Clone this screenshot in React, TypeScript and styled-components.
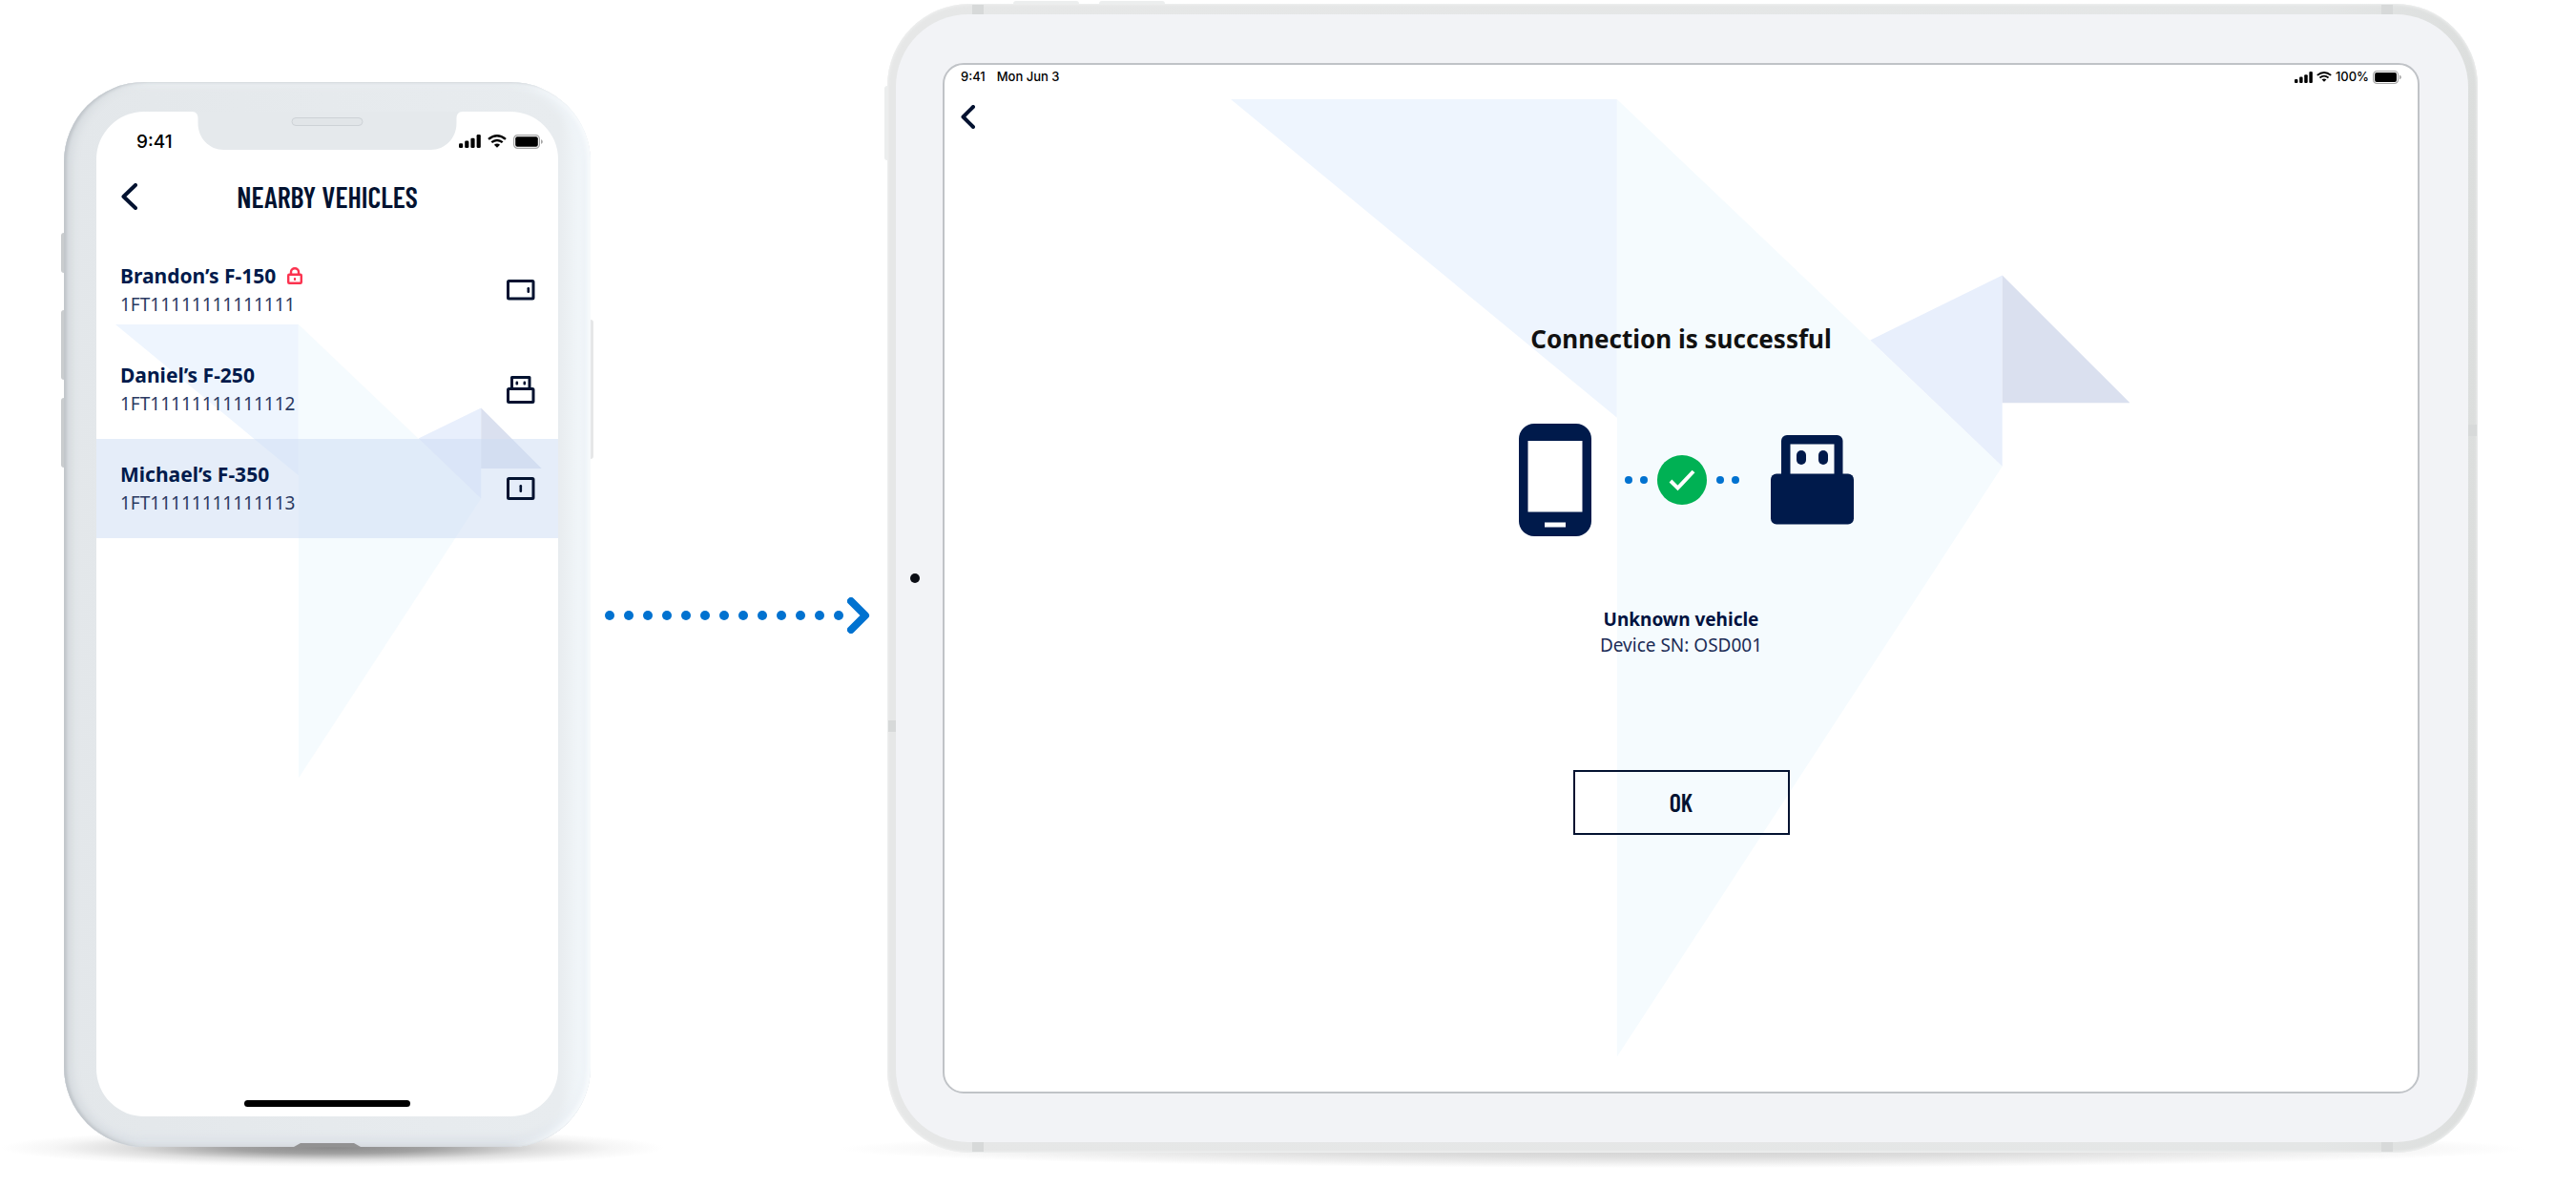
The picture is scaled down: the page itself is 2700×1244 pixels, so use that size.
import React from "react";
import styled, { createGlobalStyle } from "styled-components";

const ink = "#001a4b";
const night = "#031230";
const blue = "#0072d0";
const ui = `Inter, Roboto, "Liberation Sans", sans-serif`;
const body = `"Noto Sans", "Open Sans", sans-serif`;
const narrow = `"Barlow Condensed", "Roboto Condensed", "Liberation Sans Narrow", "Open Sans Condensed", "DejaVu Sans Condensed", sans-serif`;

const GlobalStyle = createGlobalStyle`
  *, *::before, *::after { box-sizing: border-box; }
  body { margin: 0; background: #fff; font-family: ${body}; color: ${ink}; overflow-x: hidden; }
  h1, h2, p, ul { margin: 0; padding: 0; }
  button { font: inherit; color: inherit; background: none; border: 0; padding: 0; cursor: pointer; }
  svg { display: block; flex: none; }
`;

const Stage = styled.main`
  display: flex;
  align-items: flex-start;
  padding: 4px 103px 36px 67px;
`;

/* ---------- device frames ---------- */

const Device = styled.section<{ $grow: number; $top?: number }>`
  position: relative;
  isolation: isolate;
  flex: ${(p) => p.$grow} 1 0;
  min-width: 0;
  margin-top: ${(p) => p.$top ?? 0}px;
`;

const Shadow = styled.div<{ $strong?: boolean }>`
  position: absolute;
  z-index: -2;
  left: ${(p) => (p.$strong ? "-12%" : "-3%")};
  right: ${(p) => (p.$strong ? "-14%" : "-3%")};
  bottom: ${(p) => (p.$strong ? -21 : -16)}px;
  height: 40px;
  background: ${(p) =>
    p.$strong
      ? "radial-gradient(closest-side, #8a8a8a 0%, #a2a2a2 30%, #dedede 62%, #f6f6f6 84%, #ffffff 100%)"
      : "radial-gradient(closest-side, #cfcfcf 0%, #dddddd 45%, #f1f1f1 78%, #ffffff 100%)"};
`;

const PhoneBody = styled.div`
  position: relative;
  display: flex;
  aspect-ratio: 552 / 1116;
  padding: 31px 34px 32px;
  border-radius: 84px;
  background: linear-gradient(90deg, #e3e7ea 0%, #e6eaed 50%, #e8ecef 94%, #f1f6f9 98%, #eef3f7 100%);
  box-shadow:
    inset 3px 0 3px #c1c6cb,
    inset 9px 0 9px #d6dbdf,
    inset -3px 0 4px #f8fbfd,
    inset -12px 0 10px #eff4f8,
    inset 0 4px 6px #eef2f4,
    inset 0 -3px 3px #c9ced5,
    inset 0 -10px 8px #dde2e8;
`;

const SideKey = styled.span<{ $side: "left" | "right" | "top"; $at: string; $len: string }>`
  position: absolute;
  z-index: -1;
  ${(p) =>
    p.$side === "top"
      ? `top: -3px; left: ${p.$at}; width: ${p.$len}; height: 8px;`
      : `${p.$side}: -3px; top: ${p.$at}; height: ${p.$len}; width: 8px;`}
  border-radius: 3px;
  background: ${(p) => (p.$side === "left" ? "#c9ccce" : "#e6e7e8")};
`;

const TabletKey = styled(SideKey)`
  background: #eceeee;
`;

const Port = styled.span`
  position: absolute;
  left: 50%;
  bottom: 0;
  width: 70px;
  height: 4px;
  transform: translateX(-50%);
  background: #929292;
  clip-path: polygon(10% 0, 90% 0, 100% 100%, 0 100%);
`;

const PhoneScreen = styled.div`
  position: relative;
  isolation: isolate;
  display: flex;
  flex-direction: column;
  flex: 1;
  min-width: 0;
  overflow: hidden;
  border-radius: 50px;
  background: #fff;
`;

const NotchBox = styled.div`
  position: absolute;
  top: 0;
  left: 50%;
  transform: translateX(-50%);
`;

const TabletBody = styled.div`
  position: relative;
  display: flex;
  aspect-ratio: 1667 / 1204;
  padding: 11px 10px 11px 9px;
  border-radius: 86px;
  background: linear-gradient(90deg, #e6e7e7 0%, #e4e6e6 90%, #dcdedd 100%);
  box-shadow: inset 0 0 3px 1px #f0f1f1;
`;

const TabletFace = styled.div`
  position: relative;
  display: flex;
  flex: 1;
  min-width: 0;
  padding: 51px 51px 51px 49px;
  border-radius: 76px;
  background: #f2f3f6;
`;

const Band = styled.span<{ $x?: string; $y?: string; $edge: "top" | "bottom" | "left" | "right" }>`
  position: absolute;
  ${(p) => p.$edge}: 1px;
  ${(p) =>
    p.$x ? `${p.$x}: 89px; width: 12px; height: 10px;` : `top: ${p.$y}; width: 9px; height: 12px;`}
  background: #d7d9d9;
`;

const Camera = styled.span`
  position: absolute;
  left: 15px;
  top: 50%;
  width: 10px;
  height: 10px;
  margin-top: -5px;
  border-radius: 50%;
  background: #0b0d14;
`;

const TabletScreen = styled.div`
  position: relative;
  isolation: isolate;
  display: flex;
  flex-direction: column;
  flex: 1;
  min-width: 0;
  border: 2px solid #c0c3c7;
  border-radius: 22px;
  background: #fff;
`;

/* ---------- shared pieces ---------- */

const StatusBar = styled.header<{ $large?: boolean }>`
  display: flex;
  align-items: center;
  justify-content: space-between;
  height: ${(p) => (p.$large ? 62 : 25)}px;
  padding: ${(p) => (p.$large ? "0 16px 0 42px" : "0 17px")};
  font: ${(p) => (p.$large ? "500 19px" : "500 13px")} / 1 ${ui};
  color: #000;
`;

const StatusGroup = styled.div<{ $gap: number }>`
  display: flex;
  align-items: center;
  gap: ${(p) => p.$gap}px;
`;

const BirdLayer = styled.div<{ $x: string; $y: string; $w: string }>`
  position: absolute;
  z-index: -1;
  left: ${(p) => p.$x};
  top: ${(p) => p.$y};
  width: ${(p) => p.$w};
`;

const NavBar = styled.nav<{ $tall?: boolean }>`
  display: grid;
  grid-template-columns: 1fr auto 1fr;
  align-items: center;
  height: ${(p) => (p.$tall ? 54 : 58)}px;
  padding: 0 ${(p) => (p.$tall ? 26 : 17)}px;
`;

const BackButton = styled.button`
  display: flex;
  justify-self: start;
`;

const Title = styled.h1`
  font: 600 30px / 36px ${narrow};
  color: ${night};
  text-transform: uppercase;
  white-space: nowrap;
`;

/* ---------- vehicle list ---------- */

const VehicleList = styled.ul`
  margin-top: 19px;
  list-style: none;
`;

const VehicleRow = styled.button<{ $active?: boolean }>`
  display: flex;
  align-items: center;
  justify-content: space-between;
  width: 100%;
  height: 104px;
  padding: 0 24px 0 25px;
  text-align: left;
  background: ${(p) => (p.$active ? "rgba(203, 219, 243, 0.5)" : "transparent")};
`;

const VehicleName = styled.span`
  display: flex;
  align-items: center;
  gap: 12px;
  font: 700 21px / 30px ${body};
  color: ${ink};
`;

const Vin = styled.span`
  display: block;
  font: 400 19px / 30px ${body};
  color: #2b3a62;
`;

const HomeBar = styled.div`
  align-self: center;
  width: 36%;
  height: 7px;
  margin: auto 0 10px;
  border-radius: 4px;
  background: #000;
`;

/* ---------- connector ---------- */

const Connector = styled.div`
  display: flex;
  align-items: center;
  justify-content: center;
  flex: 307 1 0;
  gap: 4px;
  min-width: 0;
  margin-top: 622px;
  padding-right: 4px;
`;

const DotRun = styled.div<{ $gap: number }>`
  display: flex;
  gap: ${(p) => p.$gap}px;
`;

const Dot = styled.span<{ $size: number }>`
  width: ${(p) => p.$size}px;
  height: ${(p) => p.$size}px;
  border-radius: 50%;
  background: ${blue};
`;

/* ---------- result panel ---------- */

const Result = styled.div`
  display: flex;
  flex-direction: column;
  align-items: center;
  padding-top: 186px;
`;

const Heading = styled.h2`
  font: 700 26px / 36px ${body};
  color: #111;
`;

const Link = styled.div`
  display: flex;
  align-items: center;
  margin: 71px 0 74px 10px;
`;

const LinkMiddle = styled.div`
  display: flex;
  align-items: center;
  gap: 10px;
  margin: 0 33px 0 35px;
`;

const DeviceName = styled.p`
  font: 700 19px / 27px ${body};
  color: #00123f;
`;

const DeviceSerial = styled.p`
  font: 400 19px / 27px ${body};
  color: #1c2c56;
`;

const OkButton = styled.button`
  width: 227px;
  height: 68px;
  margin-top: 117px;
  border: 2px solid ${night};
  font: 600 26px / 30px ${narrow};
  color: ${night};
`;

/* ---------- drawings ---------- */

const Bird = () => (
  <svg width="100%" viewBox="0 0 943 1004" aria-hidden="true">
    <path d="M0 0H405V334Z" fill="#eef5fe" />
    <path d="M405 0L809 385L405 1004Z" fill="#f5fbfe" />
    <path d="M670.500 252.500L809 184.500V385Z" fill="#e8effc" />
    <path d="M809 184.500L943 318.500H809Z" fill="#dae0ef" />
  </svg>
);

const Notch = () => (
  <svg width="283" height="40" viewBox="0 0 283 40" aria-hidden="true">
    <path d="M0 0H283C279 0 277 3 277 7V12C277 28 265 40 250 40H33C18 40 6 28 6 12V7C6 3 4 0 0 0Z" fill="#e5e9ec" />
    <rect x="104.500" y="6.500" width="74" height="8" rx="4" fill="#e1e5e8" stroke="#cdd2d6" />
  </svg>
);

const Signal = ({ w, h }: { w: number; h: number }) => (
  <svg width={w} height={h} viewBox="0 0 23 15" preserveAspectRatio="none" aria-hidden="true">
    <rect x="0" y="10" width="4.200" height="5" rx="1.300" />
    <rect x="6.200" y="7" width="4.200" height="8" rx="1.300" />
    <rect x="12.400" y="4" width="4.200" height="11" rx="1.300" />
    <rect x="18.600" y="0" width="4.200" height="15" rx="1.300" />
  </svg>
);

const Wifi = ({ w, h }: { w: number; h: number }) => (
  <svg width={w} height={h} viewBox="0 0 20 15" preserveAspectRatio="none" fill="none" stroke="#000" strokeWidth="2.400" aria-hidden="true">
    <path d="M1 5.300Q10 -2.600 19 5.300" />
    <path d="M4.300 8.800Q10 4 15.700 8.800" />
    <path d="M6.900 11.400Q10 9.200 13.100 11.400L10 14.800Z" fill="#000" stroke="none" />
  </svg>
);

const Battery = ({ w, h }: { w: number; h: number }) => (
  <svg width={w} height={h} viewBox="0 0 31 15" preserveAspectRatio="none" aria-hidden="true">
    <rect x="0.600" y="0.600" width="26.800" height="13.800" rx="4" fill="none" stroke="#a6a6a6" strokeWidth="1.200" />
    <rect x="2.200" y="2.200" width="23.600" height="10.600" rx="2" />
    <path d="M29 5.200C30.300 5.600 30.800 6.400 30.800 7.500S30.300 9.400 29 9.800Z" fill="#a6a6a6" />
  </svg>
);

const Chevron = ({ w, h }: { w: number; h: number }) => (
  <svg width={w} height={h} viewBox={`0 0 ${w} ${h}`} fill="none" stroke={night} strokeWidth="4" strokeLinecap="round" strokeLinejoin="round" aria-hidden="true">
    <path d={`M${w - 2} 2L2.500 ${h / 2}L${w - 2} ${h - 2}`} />
  </svg>
);

const LockIcon = () => (
  <svg width="16" height="18" viewBox="0 0 16 18" fill="none" stroke="#fb334f" strokeWidth="2.400" role="img" aria-label="Locked">
    <rect x="1.200" y="7.800" width="13.600" height="9" rx="1" />
    <path d="M4 8V5A4 3.800 0 0 1 12 5V8" />
    <rect x="6.900" y="11" width="2.200" height="3" rx="1" fill="#fb334f" stroke="none" />
  </svg>
);

const frame = { fill: "none", stroke: night, strokeWidth: 3, strokeLinejoin: "round" as const };

const CardIcon = () => (
  <svg width="30" height="22" viewBox="0 0 30 22" {...frame} aria-hidden="true">
    <rect x="1.500" y="1.500" width="26.500" height="18.500" rx="1" />
    <rect x="21.500" y="8" width="2.600" height="6" rx="1.200" fill={night} stroke="none" />
  </svg>
);

const UsbIcon = () => (
  <svg width="30" height="29" viewBox="0 0 30 29" {...frame} aria-hidden="true">
    <path d="M5.500 12.500V1.500H24V12.500" />
    <rect x="1.500" y="13.500" width="26.500" height="14" rx="1" />
    <rect x="9.500" y="5.500" width="2.600" height="4" rx="1.200" fill={night} stroke="none" />
    <rect x="17.500" y="5.500" width="2.600" height="4" rx="1.200" fill={night} stroke="none" />
  </svg>
);

const SlotIcon = () => (
  <svg width="30" height="24" viewBox="0 0 30 24" {...frame} aria-hidden="true">
    <rect x="1.500" y="1.500" width="26.500" height="21" rx="1" />
    <rect x="13.500" y="8" width="2.600" height="8" rx="1.200" fill={night} stroke="none" />
  </svg>
);

const ArrowHead = () => (
  <svg width="24" height="38" viewBox="0 0 24 38" fill="none" stroke={blue} strokeWidth="8" strokeLinecap="round" strokeLinejoin="round" aria-hidden="true">
    <path d="M4 4L19 19L4 34" />
  </svg>
);

const PhoneGlyph = () => (
  <svg width="76" height="118" viewBox="0 0 76 118" aria-hidden="true">
    <rect width="76" height="118" rx="16" fill={ink} />
    <rect x="9.500" y="18" width="57" height="74.500" fill="#fff" />
    <rect x="27" y="103.500" width="22" height="5" fill="#fff" />
  </svg>
);

const UsbGlyph = () => (
  <svg width="87" height="94" viewBox="0 0 87 94" aria-hidden="true">
    <path d="M11 42V6A6 6 0 0 1 17 0H69.500A6 6 0 0 1 75.500 6V42Z" fill={ink} />
    <rect y="40.500" width="87" height="53" rx="6" fill={ink} />
    <rect x="20.500" y="9.500" width="46" height="31" fill="#f7fbfe" />
    <rect x="27" y="16" width="10" height="15" rx="5" fill={ink} />
    <rect x="50" y="16" width="10" height="15" rx="5" fill={ink} />
  </svg>
);

const CheckBadge = () => (
  <svg width="52" height="52" viewBox="0 0 52 52" role="img" aria-label="Connected">
    <circle cx="26" cy="26" r="26" fill="#00b154" />
    <path d="M14 27L21.500 34.500L38 17" fill="none" stroke="#fff" strokeWidth="4" />
  </svg>
);

/* ---------- data ---------- */

const vehicles = [
  { name: "Brandon’s F-150", vin: "1FT11111111111111", Icon: CardIcon, locked: true, active: false },
  { name: "Daniel’s F-250", vin: "1FT11111111111112", Icon: UsbIcon, locked: false, active: false },
  { name: "Michael’s F-350", vin: "1FT11111111111113", Icon: SlotIcon, locked: false, active: true },
];

const Dots = ({ count, size, gap }: { count: number; size: number; gap: number }) => (
  <DotRun $gap={gap} aria-hidden="true">
    {Array.from({ length: count }, (_, i) => (
      <Dot key={i} $size={size} />
    ))}
  </DotRun>
);

const Phone = () => (
  <Device $grow={552} $top={82}>
    <Shadow $strong />
    <SideKey $side="left" $at="14.200%" $len="42px" />
    <SideKey $side="left" $at="21.400%" $len="73px" />
    <SideKey $side="left" $at="29.700%" $len="73px" />
    <SideKey $side="right" $at="22.300%" $len="146px" />
    <PhoneBody>
      <PhoneScreen>
        <BirdLayer $x="4.100%" $y="21.180%" $w="92.300%">
          <Bird />
        </BirdLayer>
        <StatusBar $large>
          <span>9:41</span>
          <StatusGroup $gap={7}>
            <Signal w={23} h={14} />
            <Wifi w={20} h={14} />
            <Battery w={31} h={15} />
          </StatusGroup>
        </StatusBar>
        <NavBar $tall>
          <BackButton aria-label="Back">
            <Chevron w={17} h={28} />
          </BackButton>
          <Title>Nearby vehicles</Title>
        </NavBar>
        <VehicleList>
          {vehicles.map(({ name, vin, Icon, locked, active }) => (
            <li key={vin}>
              <VehicleRow $active={active}>
                <span>
                  <VehicleName>
                    {name}
                    {locked && <LockIcon />}
                  </VehicleName>
                  <Vin>{vin}</Vin>
                </span>
                <Icon />
              </VehicleRow>
            </li>
          ))}
        </VehicleList>
        <HomeBar />
        <NotchBox>
          <Notch />
        </NotchBox>
      </PhoneScreen>
      <Port />
    </PhoneBody>
  </Device>
);

const Tablet = () => (
  <Device $grow={1667}>
    <Shadow />
    <TabletKey $side="top" $at="132px" $len="69px" />
    <TabletKey $side="top" $at="222px" $len="69px" />
    <TabletKey $side="left" $at="86px" $len="78px" />
    <TabletBody>
      <Band $edge="top" $x="left" />
      <Band $edge="top" $x="right" />
      <Band $edge="bottom" $x="left" />
      <Band $edge="bottom" $x="right" />
      <Band $edge="left" $y="62.400%" />
      <Band $edge="right" $y="36.600%" />
      <TabletFace>
        <Camera />
        <TabletScreen>
          <BirdLayer $x="19.400%" $y="3.340%" $w="61.050%">
            <Bird />
          </BirdLayer>
          <StatusBar>
            <StatusGroup $gap={12}>
              <span>9:41</span>
              <span>Mon Jun 3</span>
            </StatusGroup>
            <StatusGroup $gap={4}>
              <Signal w={19} h={12} />
              <Wifi w={16} h={11} />
              <span>100%</span>
              <Battery w={30} h={14} />
            </StatusGroup>
          </StatusBar>
          <NavBar>
            <BackButton aria-label="Back">
              <Chevron w={15} h={25} />
            </BackButton>
          </NavBar>
          <Result>
            <Heading>Connection is successful</Heading>
            <Link>
              <PhoneGlyph />
              <LinkMiddle>
                <Dots count={2} size={8} gap={8} />
                <CheckBadge />
                <Dots count={2} size={8} gap={8} />
              </LinkMiddle>
              <UsbGlyph />
            </Link>
            <DeviceName>Unknown vehicle</DeviceName>
            <DeviceSerial>Device SN: OSD001</DeviceSerial>
            <OkButton>OK</OkButton>
          </Result>
        </TabletScreen>
      </TabletFace>
    </TabletBody>
  </Device>
);

export default function App() {
  return (
    <>
      <GlobalStyle />
      <Stage>
        <Phone />
        <Connector>
          <Dots count={13} size={10} gap={10} />
          <ArrowHead />
        </Connector>
        <Tablet />
      </Stage>
    </>
  );
}
